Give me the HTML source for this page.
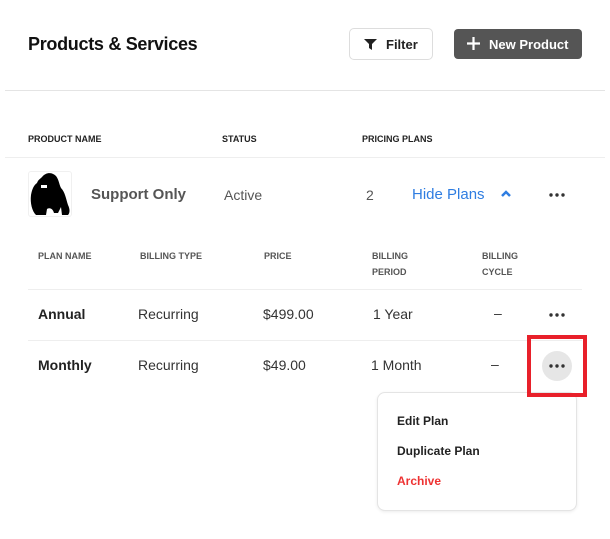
<!DOCTYPE html>
<html><head><style>
body{margin:0;width:610px;height:539px;background:#fff;font-family:"Liberation Sans",sans-serif;position:relative;overflow:hidden;color:#222}
.a{position:absolute;white-space:nowrap}
.h{font-size:9px;font-weight:bold;color:#222}
.sh{font-size:9px;font-weight:bold;color:#555;line-height:16px}
.t{font-size:14px;color:#333}
</style></head><body>
<div class="a" style="left:28px;top:34px;font-size:18px;font-weight:bold;color:#111;letter-spacing:-0.3px">Products &amp; Services</div>
<div class="a" style="left:349px;top:28px;width:84px;height:32px;border:1px solid #ddd;border-radius:5px;box-sizing:border-box"></div>
<svg class="a" style="left:364px;top:39px" width="13" height="11" viewBox="0 0 13 11"><path d="M0 0H13L8 5V11L5 9V5Z" fill="#222"/></svg>
<div class="a" style="left:386px;top:37px;font-size:13px;font-weight:bold;color:#222">Filter</div>
<div class="a" style="left:454px;top:29px;width:128px;height:30px;background:#555;border-radius:4px"></div>
<svg class="a" style="left:467px;top:37px" width="13" height="13" viewBox="0 0 13 13"><path d="M6.5 0V13M0 6.5H13" stroke="#fff" stroke-width="2.2"/></svg>
<div class="a" style="left:489px;top:37px;font-size:13px;font-weight:bold;color:#fff">New Product</div>
<div class="a" style="left:5px;top:90px;width:600px;height:1px;background:#e4e4e4"></div>
<div class="a h" style="left:28px;top:134px">PRODUCT NAME</div>
<div class="a h" style="left:222px;top:134px">STATUS</div>
<div class="a h" style="left:362px;top:134px">PRICING PLANS</div>
<div class="a" style="left:5px;top:157px;width:600px;height:1px;background:#eee"></div>
<div class="a" style="left:28px;top:171px;width:44px;height:46px;border:1px solid #f0f0f0;border-radius:3px;box-sizing:border-box"></div>
<svg class="a" style="left:28px;top:171px" width="44" height="46" viewBox="0 0 44 46"><path d="M14 6C18 1 24 1 28 5C31 9 31 13 33 17C37 21 38 28 40 34C42 38 42 42 40 44H34L33 36L30 42H26C25 38 22 36 19 38L18 44H8C4 40 2 32 3 24C4 18 6 14 9 12C10 9 12 8 14 6Z" fill="#000"/><path d="M13 14H19V17H13Z" fill="#fff"/></svg>
<div class="a" style="left:91px;top:186px;font-size:15px;font-weight:bold;color:#555">Support Only</div>
<div class="a t" style="left:224px;top:187px;color:#555">Active</div>
<div class="a t" style="left:366px;top:187px;color:#555">2</div>
<div class="a" style="left:412px;top:186px;font-size:15px;color:#2f7de1">Hide Plans</div>
<svg class="a" style="left:500px;top:190px" width="12" height="8" viewBox="0 0 12 8"><path d="M2 6L6 2L10 6" stroke="#2f7de1" stroke-width="2.5" fill="none"/></svg>
<svg class="a" style="left:549px;top:193px" width="16" height="4"><circle cx="2" cy="2" r="1.7" fill="#333"/><circle cx="8" cy="2" r="1.7" fill="#333"/><circle cx="14" cy="2" r="1.7" fill="#333"/></svg>
<div class="a sh" style="left:38px;top:248px">PLAN NAME</div>
<div class="a sh" style="left:140px;top:248px">BILLING TYPE</div>
<div class="a sh" style="left:264px;top:248px">PRICE</div>
<div class="a sh" style="left:372px;top:248px">BILLING<br>PERIOD</div>
<div class="a sh" style="left:482px;top:248px">BILLING<br>CYCLE</div>
<div class="a" style="left:28px;top:289px;width:554px;height:1px;background:#eee"></div>
<div class="a" style="left:38px;top:306px;font-size:14px;font-weight:bold;color:#222">Annual</div>
<div class="a t" style="left:138px;top:306px">Recurring</div>
<div class="a t" style="left:263px;top:306px">$499.00</div>
<div class="a t" style="left:373px;top:306px">1 Year</div>
<div class="a t" style="left:494px;top:305px">–</div>
<svg class="a" style="left:549px;top:313px" width="16" height="4"><circle cx="2" cy="2" r="1.7" fill="#333"/><circle cx="8" cy="2" r="1.7" fill="#333"/><circle cx="14" cy="2" r="1.7" fill="#333"/></svg>
<div class="a" style="left:28px;top:340px;width:554px;height:1px;background:#eee"></div>
<div class="a" style="left:38px;top:357px;font-size:14px;font-weight:bold;color:#222">Monthly</div>
<div class="a t" style="left:138px;top:357px">Recurring</div>
<div class="a t" style="left:263px;top:357px">$49.00</div>
<div class="a t" style="left:371px;top:357px">1 Month</div>
<div class="a t" style="left:491px;top:356px">–</div>
<div class="a" style="left:542px;top:351px;width:30px;height:30px;border-radius:50%;background:#e6e6e6"></div>
<svg class="a" style="left:549px;top:364px" width="16" height="4"><circle cx="2" cy="2" r="1.7" fill="#333"/><circle cx="8" cy="2" r="1.7" fill="#333"/><circle cx="14" cy="2" r="1.7" fill="#333"/></svg>
<div class="a" style="left:377px;top:392px;width:200px;height:119px;border:1px solid #e4e4e4;border-radius:8px;box-sizing:border-box;background:#fff;box-shadow:0 1px 3px rgba(0,0,0,.08)"></div>
<div class="a" style="left:527px;top:335px;width:60px;height:62px;border:4px solid #e8202a;box-sizing:border-box"></div>
<div class="a" style="left:397px;top:414px;font-size:12px;font-weight:bold;color:#222">Edit Plan</div>
<div class="a" style="left:397px;top:444px;font-size:12px;font-weight:bold;color:#222">Duplicate Plan</div>
<div class="a" style="left:397px;top:474px;font-size:12px;font-weight:bold;color:#ee3333">Archive</div>
</body></html>
